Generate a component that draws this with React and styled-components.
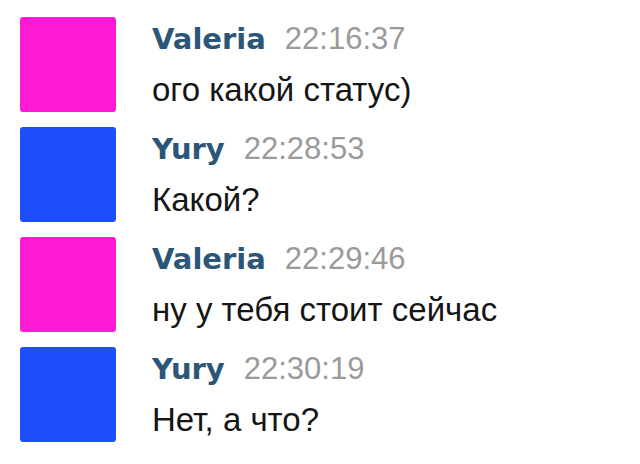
import React from 'react';
import styled, { createGlobalStyle } from 'styled-components';

const GlobalStyle = createGlobalStyle`
  html, body {
    margin: 0;
    padding: 0;
    background: #ffffff;
  }
`;

const messages = [
  { name: 'Valeria', time: '22:16:37', text: 'ого какой статус)', color: '#ff1ad6' },
  { name: 'Yury', time: '22:28:53', text: 'Какой?', color: '#1f4ffc' },
  { name: 'Valeria', time: '22:29:46', text: 'ну у тебя стоит сейчас', color: '#ff1ad6' },
  { name: 'Yury', time: '22:30:19', text: 'Нет, а что?', color: '#1f4ffc' },
];

const App = () => {
  return (
    <>
      <GlobalStyle />
      <ChatList>
        {messages.map((msg, index) => (
          <MessageRow key={index}>
            <Avatar $color={msg.color} />
            <MessageBody>
              <Header>
                <Author>{msg.name}</Author>
                <Time>{msg.time}</Time>
              </Header>
              <Text>{msg.text}</Text>
            </MessageBody>
          </MessageRow>
        ))}
      </ChatList>
    </>
  );
};

export default App;

const ChatList = styled.div`
  display: flex;
  flex-direction: column;
  padding: 17px 0 0 20px;
  width: 640px;
  height: 464px;
  box-sizing: border-box;
  overflow: hidden;
`;

const MessageRow = styled.div`
  display: flex;
  align-items: flex-start;
  gap: 36px;
  height: 110px;
`;

const Avatar = styled.div`
  width: 96px;
  height: 95px;
  border-radius: 3px;
  background: ${(p) => p.$color};
  flex-shrink: 0;
`;

const MessageBody = styled.div`
  display: flex;
  flex-direction: column;
`;

const Header = styled.div`
  display: flex;
  align-items: baseline;
  padding-top: 4px;
  height: 36px;
  line-height: 36px;
`;

const Author = styled.span`
  font-family: 'DejaVu Sans', Verdana, sans-serif;
  font-weight: bold;
  font-size: 29px;
  color: #2c5677;
`;

const Time = styled.span`
  font-family: 'Liberation Sans', Arial, sans-serif;
  font-size: 31px;
  color: #9a9a9a;
  margin-left: 19px;
`;

const Text = styled.div`
  margin-top: 13px;
  font-family: 'Liberation Sans', Arial, sans-serif;
  font-size: 33px;
  line-height: 40px;
  color: #151515;
`;
